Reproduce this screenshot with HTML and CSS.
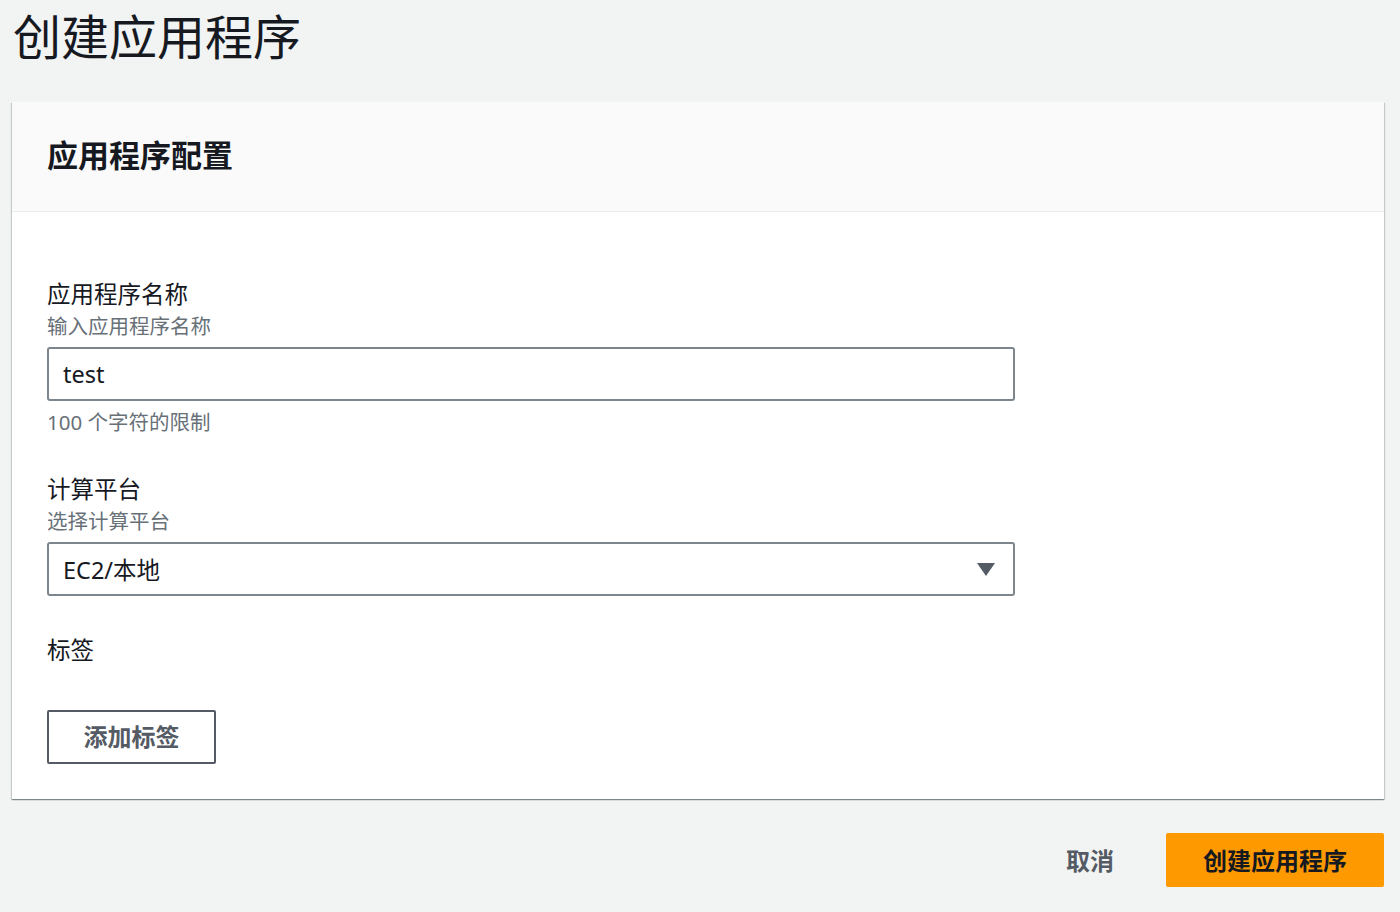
FILE: index.html
```html
<!DOCTYPE html>
<html lang="zh-CN">
<head>
<meta charset="utf-8">
<title>创建应用程序</title>
<link rel="stylesheet" href="styles.css">
</head>
<body>
<h1 class="page-title">创建应用程序</h1>
<section class="panel">
  <div class="panel-header">
    <h2 class="panel-title">应用程序配置</h2>
  </div>
  <div class="panel-body">
    <div class="field">
      <div class="label">应用程序名称</div>
      <div class="hint">输入应用程序名称</div>
      <div class="input">test</div>
      <div class="hint constraint">100 个字符的限制</div>
    </div>
    <div class="field field-gap">
      <div class="label">计算平台</div>
      <div class="hint">选择计算平台</div>
      <div class="input select">
        <span>EC2/本地</span>
        <svg class="caret" width="18" height="13" viewBox="0 0 18 13"><path d="M0 0H18L9 13Z" fill="#545b64"/></svg>
      </div>
    </div>
    <div class="field tags">
      <div class="label">标签</div>
      <button class="btn-normal">添加标签</button>
    </div>
  </div>
</section>
<div class="footer">
  <button class="btn-link">取消</button>
  <button class="btn-primary">创建应用程序</button>
</div>
</body>
</html>
```
FILE: styles.css
```css
* { box-sizing: border-box; }
body {
  margin: 0;
  background: #f2f3f3;
  font-family: "Noto Sans", "Noto Sans CJK SC", sans-serif;
  color: #16191f;
}
.page-title {
  margin: 0;
  padding: 6px 0 0 13px;
  font-size: 48px;
  line-height: 56px;
  font-weight: 400;
  font-family: "Noto Sans CJK SC", sans-serif;
  color: #16191f;
}
.panel {
  margin: 40px 16px 0 12px;
  background: #fff;
  box-shadow: 0 1px 1px 0 rgba(0,28,36,0.3), 1px 1px 1px 0 rgba(0,28,36,0.15), -1px 1px 1px 0 rgba(0,28,36,0.15);
}
.panel-header {
  background: #fafafa;
  border-bottom: 1px solid #eaeded;
  padding: 33px 35px 0 35px;
  height: 110px;
}
.panel-title {
  margin: 0;
  font-size: 31px;
  line-height: 38px;
  font-weight: 700;
  font-family: "Noto Sans CJK SC", sans-serif;
}
.panel-body {
  padding: 65px 35px 35px 35px;
}
.field { display: flex; flex-direction: column; align-items: flex-start; }
.label {
  font-size: 23.5px;
  line-height: 32px;
  font-family: "Noto Sans CJK SC", sans-serif;
}
.hint {
  margin-top: 3px;
  font-size: 20.5px;
  line-height: 28px;
  color: #687078;
  font-family: "Noto Sans", "Noto Sans CJK SC", sans-serif;
}
.constraint { margin-top: 7px; }
.input {
  margin-top: 7px;
  width: 968px;
  height: 54px;
  border: 2px solid #7d868c;
  border-radius: 3px;
  padding: 0 14px;
  display: flex;
  align-items: center;
  font-size: 23.5px;
  font-family: "Noto Sans", "Noto Sans CJK SC", sans-serif;
  color: #16191f;
}
.select { justify-content: space-between; padding-right: 18px; }
.caret { display: block; }
.field-gap { margin-top: 36px; }
.tags { margin-top: 37px; }
.btn-normal {
  margin-top: 45px;
  width: 169px;
  height: 54px;
  background: #fff;
  border: 2px solid #545b64;
  border-radius: 2px;
  font-size: 24px;
  line-height: 30px;
  font-weight: 700;
  color: #545b64;
  font-family: "Noto Sans CJK SC", sans-serif;
  padding: 0 0 3px 0;
}
.footer {
  display: flex;
  justify-content: flex-end;
  align-items: center;
  gap: 28px;
  margin-top: 34px;
  padding-right: 16px;
}
.btn-link {
  background: transparent;
  border: none;
  padding: 0 24px 2px 24px;
  height: 54px;
  font-size: 24px;
  font-weight: 700;
  color: #545b64;
  font-family: "Noto Sans CJK SC", sans-serif;
}
.btn-primary {
  width: 218px;
  height: 54px;
  background: #ff9900;
  border: none;
  border-radius: 2px;
  font-size: 24px;
  font-weight: 700;
  color: #16191f;
  font-family: "Noto Sans CJK SC", sans-serif;
  padding: 0 0 2px 0;
}
```
